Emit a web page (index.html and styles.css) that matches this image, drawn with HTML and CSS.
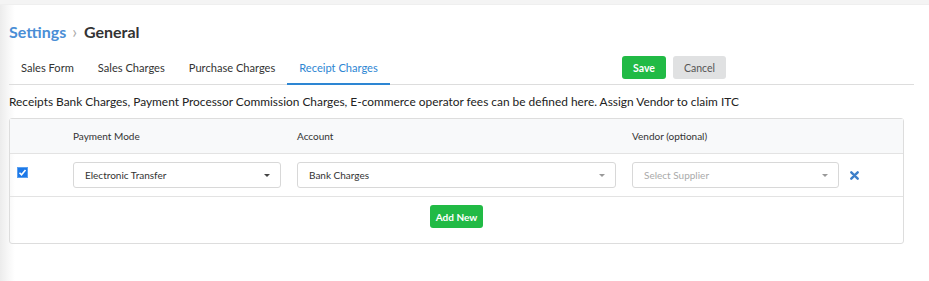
FILE: index.html
```html
<!DOCTYPE html>
<html lang="en">
<head>
  <meta charset="UTF-8">
  <title>Settings | General</title>
  <meta name="viewport" content="width=device-width, initial-scale=1.0">
  <link rel="stylesheet" href="styles.css">
</head>
<body>
  <div class="topbar"></div>
  <div class="page">
    <h1 class="crumbs"><span class="crumb-link">Settings</span><span class="crumb-sep">&rsaquo;</span><span>General</span></h1>

    <div class="tabbar">
      <nav class="tabs">
        <a class="tab">Sales Form</a>
        <a class="tab">Sales Charges</a>
        <a class="tab">Purchase Charges</a>
        <a class="tab active">Receipt Charges</a>
      </nav>
      <div class="actions">
        <button class="btn btn-green">Save</button>
        <button class="btn btn-grey">Cancel</button>
      </div>
    </div>

    <p class="note">Receipts Bank Charges, Payment Processor Commission Charges, E-commerce operator fees can be defined here. Assign Vendor to claim ITC</p>

    <div class="charges">
      <div class="grid-row head">
        <div></div>
        <div>Payment Mode</div>
        <div>Account</div>
        <div>Vendor (optional)</div>
        <div></div>
      </div>
      <div class="grid-row item">
        <div class="cell-check">
          <span class="check"><svg width="9" height="9" viewBox="0 0 9 9"><path d="M1.5 4.8 L3.5 6.8 L7.5 2" fill="none" stroke="#fff" stroke-width="1.6"/></svg></span>
        </div>
        <div><div class="select">Electronic Transfer<span class="caret dark"></span></div></div>
        <div><div class="select">Bank Charges<span class="caret"></span></div></div>
        <div><div class="select placeholder">Select Supplier<span class="caret"></span></div></div>
        <div class="cell-del">
          <svg width="9" height="9" viewBox="0 0 9 9"><path d="M1.3 1.3 L7.7 7.7 M7.7 1.3 L1.3 7.7" stroke="#3d7fc9" stroke-width="2.4" stroke-linecap="round"/></svg>
        </div>
      </div>
      <div class="add-row">
        <button class="btn btn-green btn-add">Add New</button>
      </div>
    </div>
  </div>
</body>
</html>
```

FILE: styles.css
```css
body { margin: 0; font-family: Lato, "Open Sans", Arial, sans-serif; color: #333; background: linear-gradient(90deg, #ececec 0, #f7f7f7 8px, #fff 15px); height: 281px; overflow: hidden; }
.topbar { height: 4px; background: #f4f4f4; border-bottom: 1px solid #efefef; }
.page { padding: 0 15px 0 9px; }

.crumbs { margin: 0; padding-top: 12px; height: 28px; font-size: 16px; font-weight: 700; color: #333; display: flex; align-items: center; }
.crumb-link { color: #4a8ed6; }
.crumb-sep { color: #aaa; font-weight: 400; margin: 0 7px 0 6px; font-size: 17px; }

.tabbar { display: flex; align-items: flex-end; justify-content: space-between; border-bottom: 1px solid #ddd; margin-top: 11px; }
.tabs { display: flex; }
.tab { padding: 5px 12px 9px; font-size: 11.1px; color: #333; border-bottom: 2px solid transparent; margin-bottom: -1px; cursor: pointer; }
.tab.active { color: #2d86d3; border-bottom-color: #2d86d3; }
.actions { display: flex; gap: 7px; margin: 0 188px 5px 0; }

.btn { font-family: inherit; font-size: 10.5px; border: none; border-radius: 3px; height: 23px; padding: 0 11px; cursor: pointer; }
.btn-green { background: #21ba45; color: #fff; font-weight: 700; }
.btn-grey { background: #e0e1e2; color: #555; padding: 0 11px; }

.note { margin: 9px 0 0; font-size: 11.9px; color: #222; }

.charges { margin-top: 9px; width: 893px; border: 1px solid #ddd; border-radius: 3px; }
.grid-row { display: grid; grid-template-columns: 63px 224px 335px 218px 1fr; align-items: center; border-bottom: 1px solid #e3e3e3; font-size: 10px; }
.head { height: 34px; background: #f8f9fa; color: #333; }
.item { height: 42px; }
.cell-check { padding-left: 7px; display: flex; }
.check { width: 11px; height: 11px; background: #1c78e8; border: 1px solid #5aa0f0; box-sizing: border-box; display: flex; align-items: center; justify-content: center; margin-top: -6px; }

.select { position: relative; height: 26px; box-sizing: border-box; border: 1px solid #d8d8d8; border-radius: 3px; display: flex; align-items: center; padding-left: 11px; color: #333; margin-right: 16px; }
.grid-row > div:nth-child(4) .select { margin-right: 11px; }
.select.placeholder { color: #aaa; }
.caret { position: absolute; right: 10px; top: 11px; border-left: 3px solid transparent; border-right: 3px solid transparent; border-top: 3px solid #999; }
.caret.dark { border-top-color: #444; }
.cell-del { display: flex; }

.add-row { display: flex; justify-content: center; padding: 8px 0 15px; }
.btn-add { padding: 0 6px; font-size: 10px; }
```
